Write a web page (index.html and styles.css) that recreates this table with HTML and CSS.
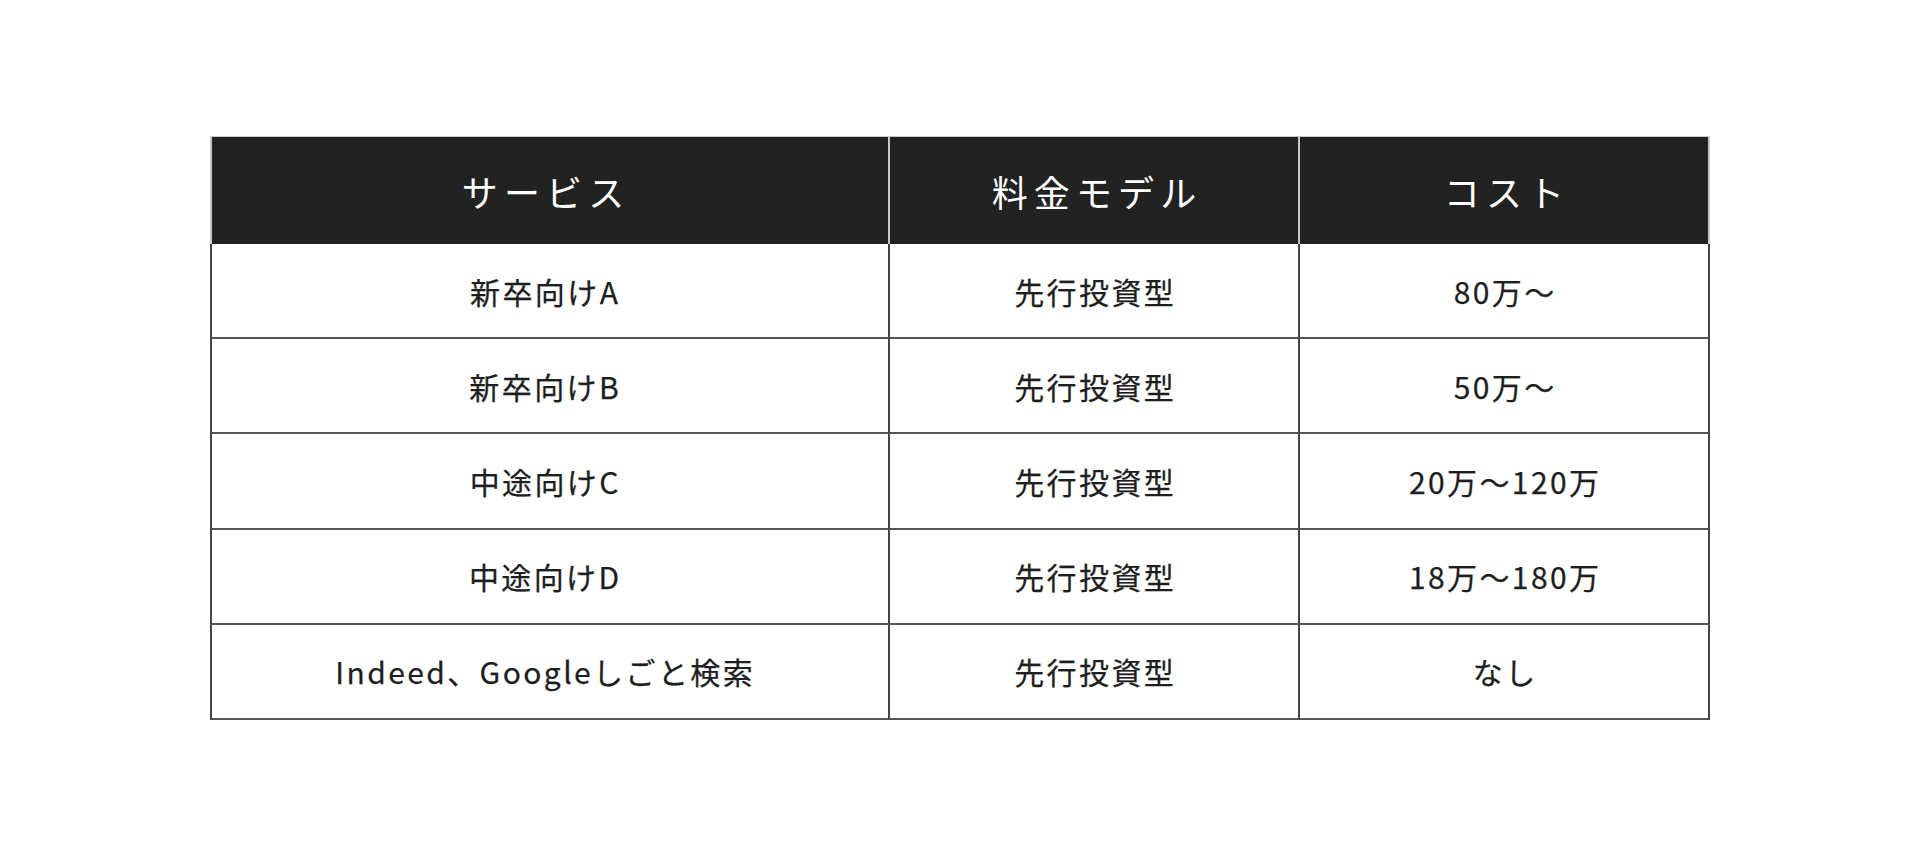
FILE: index.html
```html
<!DOCTYPE html>
<html lang="ja">
<head>
<meta charset="utf-8">
<title>料金比較</title>
<link rel="stylesheet" href="styles.css">
</head>
<body>
<div class="page">
  <table class="compare">
    <colgroup>
      <col class="col-service">
      <col class="col-model">
      <col class="col-cost">
    </colgroup>
    <thead>
      <tr>
        <th>サービス</th>
        <th>料金モデル</th>
        <th>コスト</th>
      </tr>
    </thead>
    <tbody>
      <tr><td>新卒向けA</td><td>先行投資型</td><td>80万～</td></tr>
      <tr><td>新卒向けB</td><td>先行投資型</td><td>50万～</td></tr>
      <tr><td>中途向けC</td><td>先行投資型</td><td>20万～120万</td></tr>
      <tr><td>中途向けD</td><td>先行投資型</td><td>18万～180万</td></tr>
      <tr><td>Indeed、Googleしごと検索</td><td>先行投資型</td><td>なし</td></tr>
    </tbody>
  </table>
</div>
</body>
</html>
```

FILE: styles.css
```css
html, body {
  margin: 0;
  padding: 0;
  background: #ffffff;
}

body {
  font-family: "Noto Sans CJK JP", "Noto Sans", sans-serif;
  color: #1e1e1e;
}

.page {
  padding: 136px 0 0;
  display: flex;
  justify-content: center;
}

.compare {
  width: 1500px;
  border-collapse: separate;
  border-spacing: 0;
  table-layout: fixed;
}

.col-service { width: 680px; }
.col-model { width: 410px; }
.col-cost { width: 410px; }

.compare th {
  background: #222222;
  color: #ffffff;
  font-weight: 400;
  font-size: 36px;
  letter-spacing: 0.17em;
  text-indent: 0.17em;
  height: 108px;
  padding: 0;
  border-top: 1px solid #c8c8c8;
  border-right: 2px solid #c8c8c8;
  text-align: center;
  vertical-align: middle;
  box-sizing: border-box;
}

.compare th:first-child {
  border-left: 2px solid #c8c8c8;
  padding-right: 14px;
}

.compare td {
  font-size: 30px;
  font-weight: 400;
  letter-spacing: 0.08em;
  text-indent: 0.08em;
  height: 95.2px;
  padding: 0;
  text-align: center;
  vertical-align: middle;
  border-right: 2px solid #444444;
  border-bottom: 2px solid #555555;
  box-sizing: border-box;
  -webkit-text-stroke: 0.25px #1e1e1e;
}

.compare td:first-child {
  border-left: 2px solid #444444;
  padding-right: 12px;
}
```
